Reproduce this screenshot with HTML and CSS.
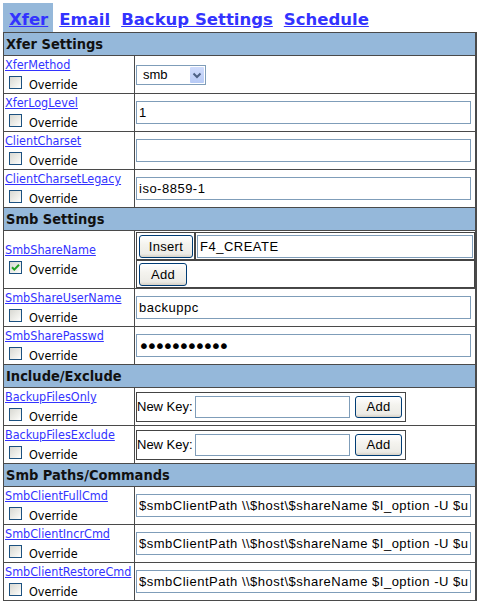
FILE: index.html
```html
<!DOCTYPE html>
<html>
<head>
<meta charset="utf-8">
<link rel="stylesheet" href="styles.css">
</head>
<body>
<nav class="tabs">
  <a class="tab active" href="#">Xfer</a>
  <a class="tab" href="#">Email</a>
  <a class="tab" href="#">Backup Settings</a>
  <a class="tab" href="#">Schedule</a>
</nav>
<div class="tbl">
  <div class="hdr">Xfer Settings</div>

  <div class="lbl"><a href="#">XferMethod</a><div class="ovr"><span class="cb"></span>Override</div></div>
  <div class="val">
    <div class="select"><span class="seltxt">smb</span><span class="arrow"><svg width="14" height="16" viewBox="0 0 14 16"><path d="M3.5 6.5 L7 10 L10.5 6.5" fill="none" stroke="#4d6185" stroke-width="2"/></svg></span></div>
  </div>

  <div class="lbl"><a href="#">XferLogLevel</a><div class="ovr"><span class="cb"></span>Override</div></div>
  <div class="val"><input class="txt" type="text" value="1"></div>

  <div class="lbl"><a href="#">ClientCharset</a><div class="ovr"><span class="cb"></span>Override</div></div>
  <div class="val"><input class="txt" type="text" value=""></div>

  <div class="lbl"><a href="#">ClientCharsetLegacy</a><div class="ovr"><span class="cb"></span>Override</div></div>
  <div class="val"><input class="txt" type="text" value="iso-8859-1"></div>

  <div class="hdr">Smb Settings</div>

  <div class="lbl tall"><a href="#">SmbShareName</a><div class="ovr"><span class="cb"><svg width="11" height="11" viewBox="0 0 11 11"><path d="M2 5.2 L4.3 7.6 L9 2.8" fill="none" stroke="#21a121" stroke-width="2"/></svg></span>Override</div></div>
  <div class="val tall">
    <div class="multi">
      <div class="mrow1">
        <div class="mc1"><button class="btn ins" type="button">Insert</button></div>
        <div class="mc2"><input class="txt grow" type="text" value="F4_CREATE"></div>
      </div>
      <div class="mrow2"><button class="btn add" type="button">Add</button></div>
    </div>
  </div>

  <div class="lbl"><a href="#">SmbShareUserName</a><div class="ovr"><span class="cb"></span>Override</div></div>
  <div class="val"><input class="txt" type="text" value="backuppc"></div>

  <div class="lbl"><a href="#">SmbSharePasswd</a><div class="ovr"><span class="cb"></span>Override</div></div>
  <div class="val"><input class="txt pw" type="password" value="xxxxxxxxxxx"></div>

  <div class="hdr">Include/Exclude</div>

  <div class="lbl"><a href="#">BackupFilesOnly</a><div class="ovr"><span class="cb"></span>Override</div></div>
  <div class="val">
    <div class="kbox"><span class="klbl">New Key:</span><input class="txt key" type="text" value=""><button class="btn kadd" type="button">Add</button></div>
  </div>

  <div class="lbl"><a href="#">BackupFilesExclude</a><div class="ovr"><span class="cb"></span>Override</div></div>
  <div class="val">
    <div class="kbox"><span class="klbl">New Key:</span><input class="txt key" type="text" value=""><button class="btn kadd" type="button">Add</button></div>
  </div>

  <div class="hdr">Smb Paths/Commands</div>

  <div class="lbl"><a href="#">SmbClientFullCmd</a><div class="ovr"><span class="cb"></span>Override</div></div>
  <div class="val"><input class="txt" type="text" value="$smbClientPath \\$host\$shareName $I_option -U $userName -E -d 1 -c tarmode\ full -Tc$X_option - $fileList"></div>

  <div class="lbl"><a href="#">SmbClientIncrCmd</a><div class="ovr"><span class="cb"></span>Override</div></div>
  <div class="val"><input class="txt" type="text" value="$smbClientPath \\$host\$shareName $I_option -U $userName -E -d 1 -c tarmode\ full -TcN$X_option $timeStampFile - $fileList"></div>

  <div class="lbl"><a href="#">SmbClientRestoreCmd</a><div class="ovr"><span class="cb"></span>Override</div></div>
  <div class="val"><input class="txt" type="text" value="$smbClientPath \\$host\$shareName $I_option -U $userName -E -d 1 -c tarmode\ full -Tx -"></div>
</div>
</body>
</html>
```

FILE: styles.css
```css
html, body {
  margin: 0;
  padding: 0;
  background: #ffffff;
}
body {
  padding: 3px 0 0 3px;
  width: 480px;
  height: 604px;
  box-sizing: border-box;
  overflow: hidden;
  font-family: "DejaVu Sans", Verdana, sans-serif;
  color: #000;
}
.tabs {
  display: flex;
  height: 29px;
}
.tab {
  font-weight: bold;
  font-size: 16.5px;
  line-height: 19px;
  padding: 7px 5px 3px 6px;
  color: #3333ff;
  text-decoration: underline;
}
.tab.active {
  background: #95b8da;
  padding-right: 5px;
}
.tbl {
  display: grid;
  grid-template-columns: 131px 342px;
  width: 474px;
  box-sizing: border-box;
  border-top: 1px solid #4a4a4a;
  border-left: 1px solid #4a4a4a;
}
.hdr {
  grid-column: 1 / -1;
  height: 23px;
  box-sizing: border-box;
  background: #95b8da;
  border-right: 2px solid #4a4a4a;
  border-bottom: 1px solid #4a4a4a;
  padding-left: 2px;
  font-family: "DejaVu Sans Condensed", "DejaVu Sans", sans-serif;
  font-stretch: condensed;
  font-weight: bold;
  font-size: 14.5px;
  line-height: 22px;
  color: #111;
}
.lbl {
  height: 38px;
  box-sizing: border-box;
  border-right: 1px solid #4a4a4a;
  border-bottom: 1px solid #4a4a4a;
  padding: 0 1px;
  display: flex;
  flex-direction: column;
  justify-content: center;
  align-items: flex-start;
  white-space: nowrap;
  font-family: "DejaVu Sans Condensed", "DejaVu Sans", sans-serif;
  font-stretch: condensed;
}
.lbl a {
  font-size: 12.5px;
  line-height: 14px;
  color: #3333ff;
  text-decoration: underline;
}
.ovr {
  margin-top: 4px;
  font-size: 12.5px;
  line-height: 13px;
}
.cb {
  display: inline-block;
  vertical-align: baseline;
  width: 13px;
  height: 13px;
  box-sizing: border-box;
  margin: 0 7px 0 4px;
  border: 1px solid #1c5180;
  background: linear-gradient(135deg, #d8d8d2 0%, #f2f2ee 70%, #ffffff 100%);
}
.cb svg {
  display: block;
}
.val {
  height: 38px;
  box-sizing: border-box;
  border-right: 2px solid #4a4a4a;
  border-bottom: 1px solid #4a4a4a;
  padding-left: 1px;
  display: flex;
  align-items: center;
}
.tall {
  height: 58px;
}
.txt {
  width: 335px;
  height: 23px;
  box-sizing: border-box;
  border: 1px solid #7f9db9;
  margin: 0;
  padding: 0 2px;
  font-family: "Liberation Sans", Arial, sans-serif;
  font-size: 13px;
  letter-spacing: 0.5px;
  color: #000;
  background: #fff;
  outline: none;
}
.pw {
  font-family: "DejaVu Sans", sans-serif;
  font-size: 20px;
  letter-spacing: -3.8px;
  padding-left: 1px;
}
.select {
  width: 70px;
  height: 20px;
  box-sizing: border-box;
  border: 1px solid #7f9db9;
  padding: 1px;
  display: flex;
  align-items: center;
  font-family: "Liberation Sans", Arial, sans-serif;
  font-size: 13px;
  background: #fff;
}
.seltxt {
  flex: 1;
  padding-left: 5px;
}
.arrow {
  width: 14px;
  height: 16px;
  display: block;
  background: linear-gradient(#d0dcfc, #b7caf5);
  border-radius: 1px;
}
.arrow svg {
  display: block;
}
.multi {
  flex: 1;
  border: 1px solid #444;
}
.mrow1 {
  display: flex;
  border-bottom: 1px solid #444;
}
.mc1 {
  padding: 2px 1px 1px 2px;
  border-right: 1px solid #444;
}
.mc2 {
  flex: 1;
  display: flex;
  border-left: 1px solid #444;
  padding: 2px 1px 1px 1px;
}
.txt.grow {
  flex: 1;
  width: auto;
}
.mrow2 {
  border-top: 1px solid #444;
  padding: 2px 2px 1px;
}
.btn {
  display: block;
  height: 23px;
  box-sizing: border-box;
  margin: 0;
  padding: 0;
  border: 1px solid #003c74;
  border-radius: 3px;
  background: linear-gradient(#ffffff 0%, #f4f3ee 40%, #ecebe6 85%, #d6d0c5 100%);
  font-family: "Liberation Sans", Arial, sans-serif;
  font-size: 13px;
  letter-spacing: 0.3px;
  color: #000;
}
.ins {
  width: 54px;
}
.add {
  width: 48px;
}
.kbox {
  display: flex;
  align-items: center;
  width: 270px;
  height: 30px;
  box-sizing: border-box;
  border: 1px solid #444;
  padding: 0 2px 0 0;
}
.klbl {
  font-family: "Liberation Sans", Arial, sans-serif;
  font-size: 13px;
  width: 58px;
  white-space: nowrap;
}
.txt.key {
  width: 155px;
  height: 22px;
}
.kadd {
  width: 47px;
  height: 22px;
  margin-left: 5px;
}
```
